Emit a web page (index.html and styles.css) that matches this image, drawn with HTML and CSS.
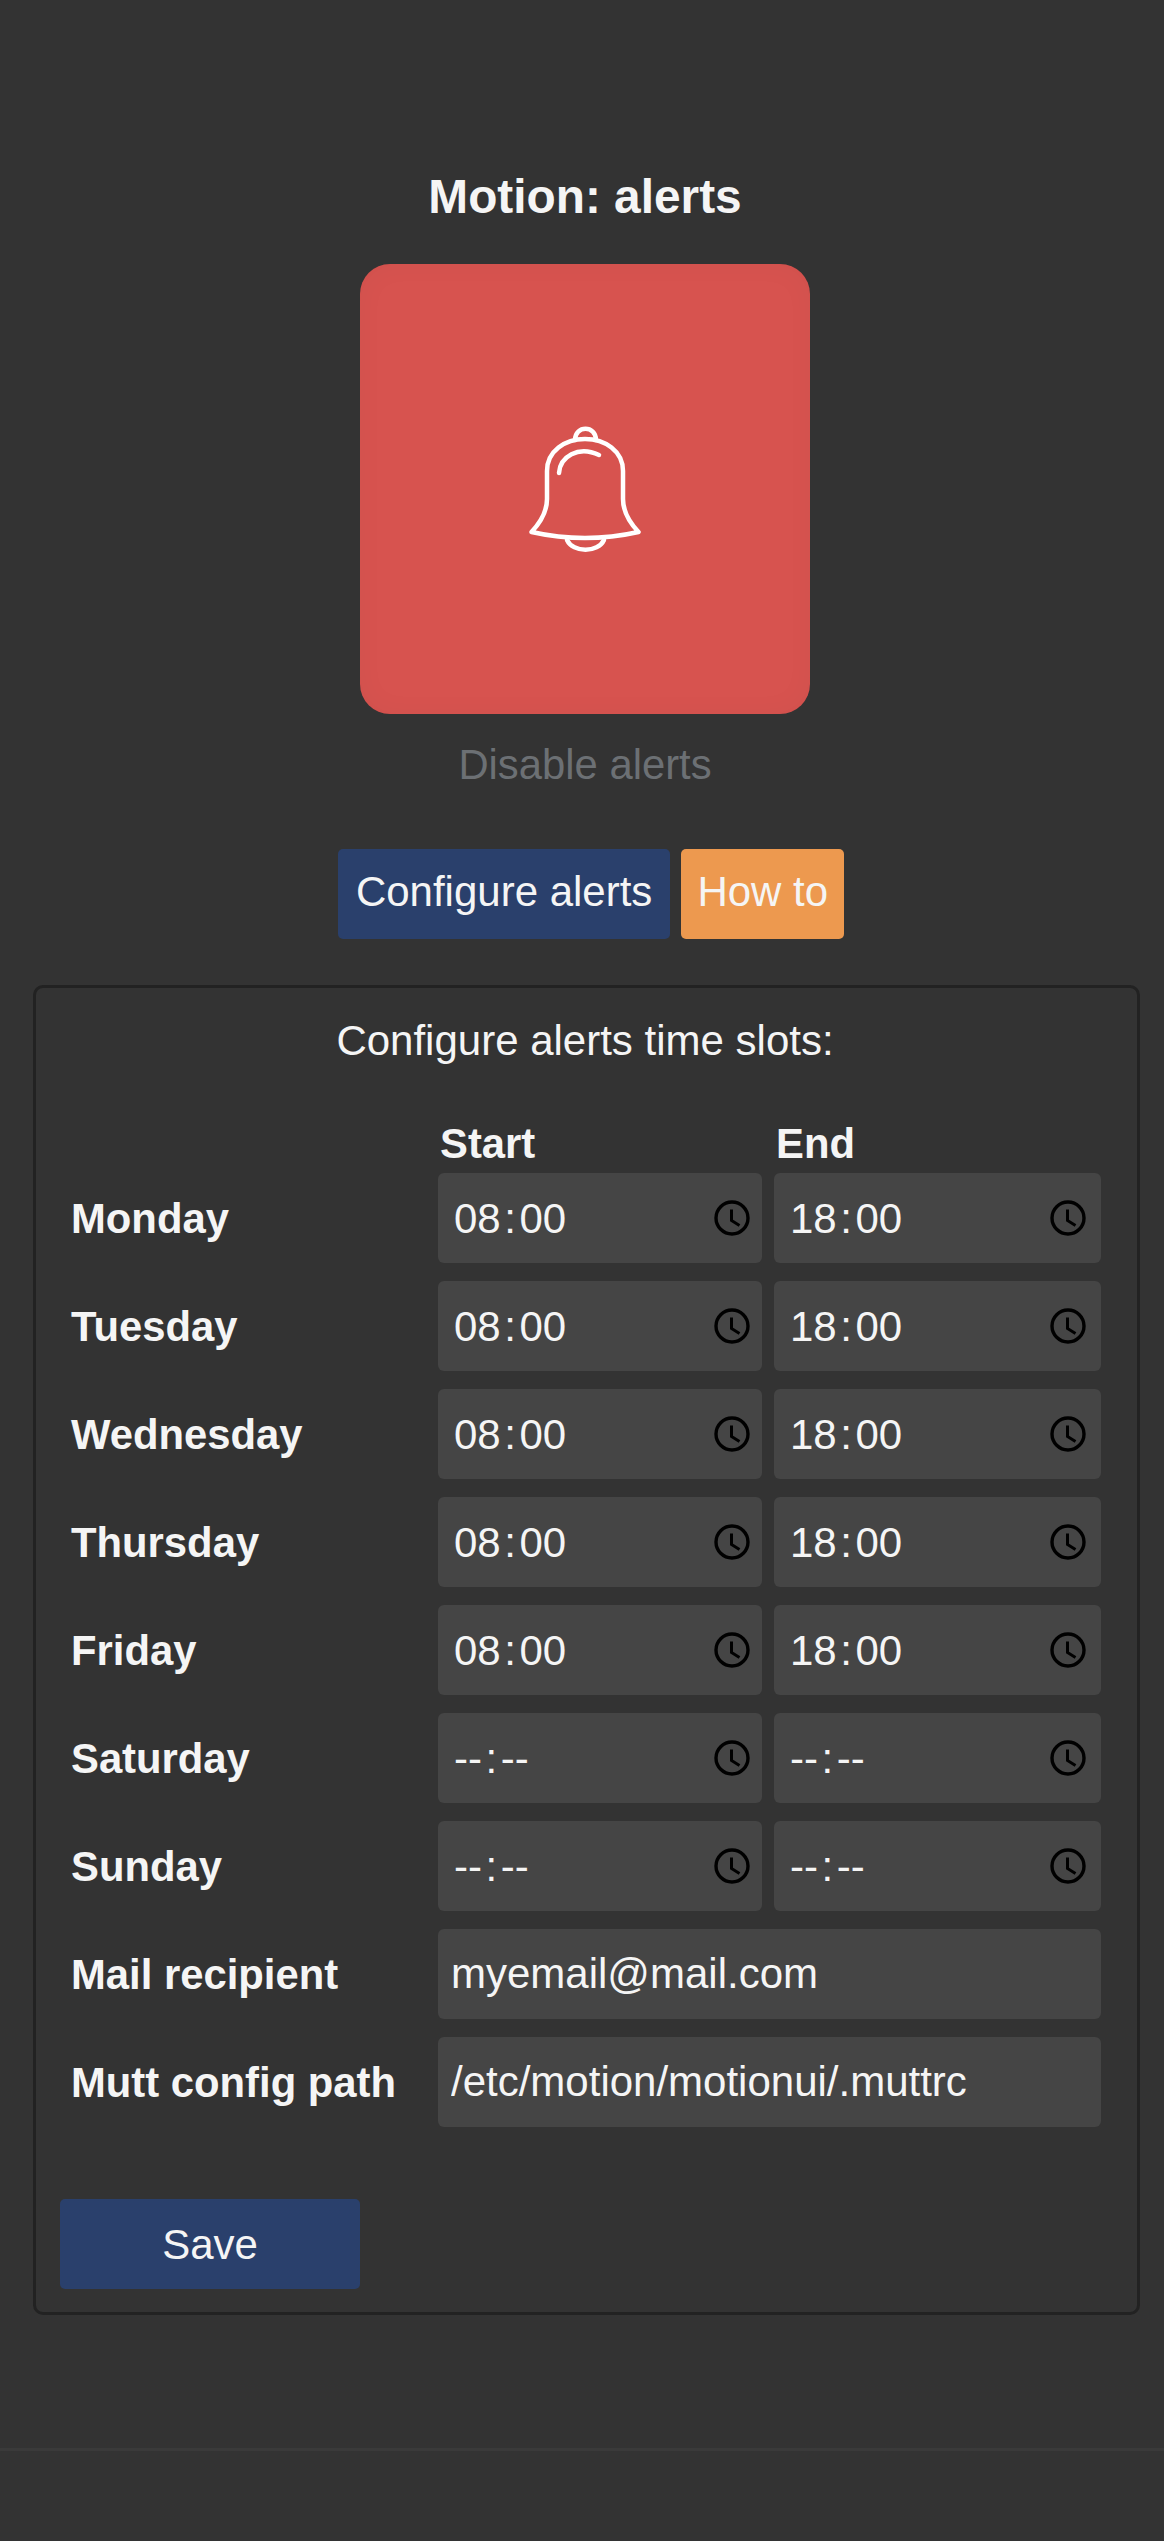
FILE: index.html
```html
<!DOCTYPE html>
<html lang="en">
<head>
    <meta charset="UTF-8">
    <meta name="viewport" content="width=device-width, initial-scale=1.0">
    <title>Motion: alerts</title>
    <link rel="stylesheet" href="styles.css">
</head>
<body>

<svg class="icon-defs" width="0" height="0">
    <symbol id="clock" viewBox="0 0 36 36">
        <circle cx="18" cy="18" r="16" fill="none" stroke="#000" stroke-width="3.4"/>
        <path d="M17.5 9.5V20.5L25.5 25.5" fill="none" stroke="#000" stroke-width="3"/>
    </symbol>
</svg>

<main class="container">
    <div class="status">
        <h1>Motion: alerts</h1>

        <!-- Alerts toggle -->
        <div class="toggle-box">
            <svg class="bell" viewBox="47 25 116 127" width="116" height="127" fill="none" stroke="#fff" stroke-width="4.5" stroke-linecap="round" stroke-linejoin="round">
                <path d="M67 70C67 50 85 38 105 38C125 38 143 50 143 70V98C143 112 150 122 158.5 131Q105 143 51.5 131C60 122 67 112 67 98Z"/>
                <path d="M95 39C95 24 116 24 116 39"/>
                <path d="M87 139C93 152 118 152 124 139"/>
                <path d="M79 72C80 56 98 44 119 54"/>
            </svg>
        </div>
        <p class="toggle-label">Disable alerts</p>
    </div>

    <div class="actions">
        <a class="btn btn-blue" href="#">Configure alerts</a>
        <a class="btn btn-orange" href="#">How to</a>
    </div>

    <!-- Time slots form -->
    <form class="slots-form">
        <p class="form-title">Configure alerts time slots:</p>

        <div class="slots-grid">
            <span></span>
            <span class="col-head">Start</span>
            <span class="col-head">End</span>

            <label>Monday</label>
            <div class="time"><span>08<i>:</i>00</span><svg><use href="#clock"/></svg></div>
            <div class="time time-end"><span>18<i>:</i>00</span><svg><use href="#clock"/></svg></div>

            <label>Tuesday</label>
            <div class="time"><span>08<i>:</i>00</span><svg><use href="#clock"/></svg></div>
            <div class="time time-end"><span>18<i>:</i>00</span><svg><use href="#clock"/></svg></div>

            <label>Wednesday</label>
            <div class="time"><span>08<i>:</i>00</span><svg><use href="#clock"/></svg></div>
            <div class="time time-end"><span>18<i>:</i>00</span><svg><use href="#clock"/></svg></div>

            <label>Thursday</label>
            <div class="time"><span>08<i>:</i>00</span><svg><use href="#clock"/></svg></div>
            <div class="time time-end"><span>18<i>:</i>00</span><svg><use href="#clock"/></svg></div>

            <label>Friday</label>
            <div class="time"><span>08<i>:</i>00</span><svg><use href="#clock"/></svg></div>
            <div class="time time-end"><span>18<i>:</i>00</span><svg><use href="#clock"/></svg></div>

            <label>Saturday</label>
            <div class="time"><span>--<i>:</i>--</span><svg><use href="#clock"/></svg></div>
            <div class="time time-end"><span>--<i>:</i>--</span><svg><use href="#clock"/></svg></div>

            <label>Sunday</label>
            <div class="time"><span>--<i>:</i>--</span><svg><use href="#clock"/></svg></div>
            <div class="time time-end"><span>--<i>:</i>--</span><svg><use href="#clock"/></svg></div>

            <label>Mail recipient</label>
            <input class="wide" type="text" value="myemail@mail.com">

            <label>Mutt config path</label>
            <input class="wide" type="text" value="/etc/motion/motionui/.muttrc">
        </div>

        <button class="btn btn-blue save" type="button">Save</button>
    </form>
</main>

<footer></footer>

</body>
</html>
```

FILE: styles.css
```css
body {
    font-family: "Liberation Sans", Arial, sans-serif;
    font-size: 42px;
    background-color: #333;
    color: #f5f5f5;
    margin: 0;
}

.icon-defs {
    position: absolute;
}

.container {
    padding: 169px 24px 0 33px;
    text-align: center;
}

.status {
    margin-right: 3px;
}

h1 {
    font-size: 47.8px;
    line-height: 56px;
    margin: 0 0 39px;
}

.toggle-box {
    width: 450px;
    height: 450px;
    margin: 0 auto;
    display: flex;
    justify-content: center;
    align-items: center;
    background-color: #d7534f;
    border-radius: 30px;
    box-shadow: inset 0 0 30px rgba(0, 0, 0, 0.03);
}

.toggle-label {
    font-size: 41.8px;
    line-height: 48px;
    margin: 27px 0 60px;
    color: #6c7074;
}

.actions {
    display: flex;
    justify-content: center;
    gap: 11px;
    margin: 0 0 46px 9px;
}

.btn {
    display: inline-block;
    height: 90px;
    padding: 0 18px;
    box-sizing: border-box;
    border: none;
    border-radius: 5px;
    font: inherit;
    line-height: 86px;
    color: #f5f5f5;
    text-decoration: none;
}

.btn-blue {
    background-color: #2a406c;
}

.btn-orange {
    padding: 0 16px;
    background-color: #ed994f;
}

.slots-form {
    border: 3px solid #222;
    border-radius: 10px;
    padding: 29px 24px 23px;
    text-align: left;
}

.form-title {
    line-height: 48px;
    margin: 0 3px 55px 0;
    text-align: center;
}

.slots-grid {
    display: grid;
    grid-template-columns: 355px 324px 327px;
    column-gap: 12px;
    row-gap: 18px;
    margin-left: 11px;
}

.slots-grid label,
.col-head {
    font-weight: bold;
    font-size: 41.8px;
}

.slots-grid label {
    align-self: center;
    padding-top: 2px;
}

.col-head {
    line-height: 48px;
    margin: 0 0 -13px 2px;
}

.time,
input {
    height: 90px;
    box-sizing: border-box;
    border-radius: 6px;
    background-color: #454545;
    color: #f5f5f5;
}

.time {
    display: flex;
    justify-content: space-between;
    align-items: center;
    padding: 0 12px 0 16px;
}

.time span {
    padding-top: 2px;
}

.time-end {
    padding-right: 15px;
}

.time i {
    font-style: normal;
    padding: 0 3.5px;
}

.time svg {
    width: 36px;
    height: 36px;
}

input {
    width: 100%;
    padding: 0 13px;
    border: none;
    font: inherit;
}

.wide {
    grid-column: 2 / 4;
}

.save {
    display: block;
    width: 300px;
    margin-top: 72px;
    padding: 2px 0 0;
    line-height: 88px;
    text-align: center;
}

footer {
    margin-top: 133px;
    height: 92px;
    border-top: 3px solid #3a3a3a;
}
```
